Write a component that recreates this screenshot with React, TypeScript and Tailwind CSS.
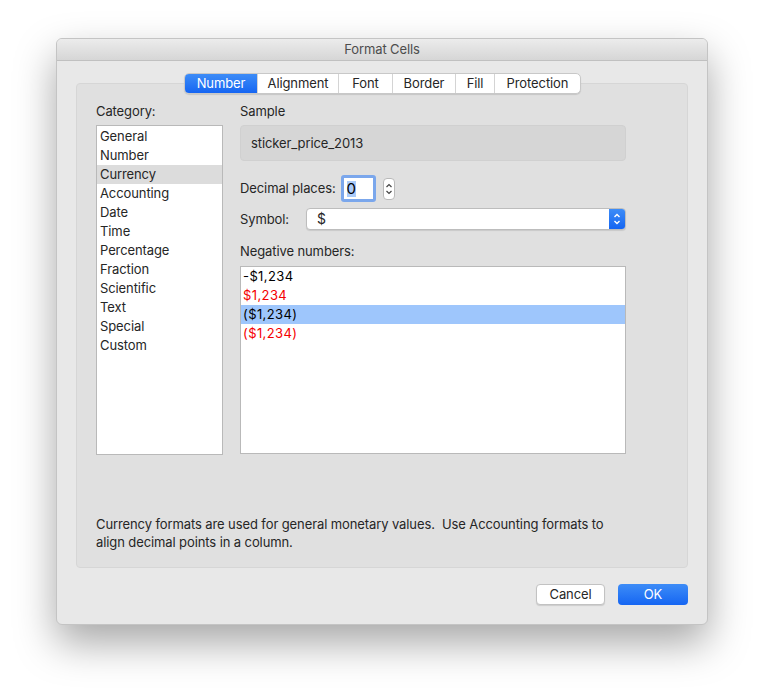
import React, { useState } from 'react';

const tabs = [
  { name: 'Number', w: 'w-[72px]' },
  { name: 'Alignment', w: 'w-[81px]' },
  { name: 'Font', w: 'w-[54px]' },
  { name: 'Border', w: 'w-[63px]' },
  { name: 'Fill', w: 'w-[39px]' },
  { name: 'Protection', w: 'w-[86px]' },
];
const categories = ['General', 'Number', 'Currency', 'Accounting', 'Date', 'Time', 'Percentage', 'Fraction', 'Scientific', 'Text', 'Special', 'Custom'];
const negatives = [
  { label: '-$1,234', red: false },
  { label: '$1,234', red: true },
  { label: '($1,234)', red: false },
  { label: '($1,234)', red: true },
];

const App: React.FC = () => {
  const [tab, setTab] = useState('Number');
  const [category, setCategory] = useState('Currency');
  const [negative, setNegative] = useState(2);

  return (
    <div className="w-[764px] h-[699px] bg-white pt-[38px] pl-[56px] text-[13px] tracking-[-0.1px] text-[#262626]" style={{ fontFamily: 'Inter, "Liberation Sans", sans-serif' }}>
      <div className="w-[652px] h-[587px] rounded-[6px] bg-[#e8e8e8] border border-[#c4c4c4] shadow-[0_18px_40px_rgba(0,0,0,0.35)] flex flex-col overflow-hidden">
        <div className="h-[22px] shrink-0 bg-gradient-to-b from-[#ececec] to-[#d6d6d6] border-b border-[#c0c0c0] flex items-center justify-center text-[13px] text-[#4d4d4d]">
          Format Cells
        </div>

        <div className="relative mx-[19px] mt-[22px] h-[485px] rounded-[4px] bg-[#e0e0e0] border border-[#d6d6d6]">
          <div className="absolute -top-[11px] left-[107px] flex h-[21px] rounded-[5px] bg-white border border-[#c8c8c8] shadow-[0_1px_1px_rgba(0,0,0,0.12)] overflow-hidden">
            {tabs.map((t, i) => (
              <button
                key={t.name}
                onClick={() => setTab(t.name)}
                className={`${t.w} leading-[19px] text-[13px] text-center ${i > 0 ? 'border-l border-[#d4d4d4]' : ''} ${tab === t.name ? 'bg-gradient-to-b from-[#3d8cf7] to-[#1565f2] text-white' : 'text-[#262626]'}`}
              >
                {t.name}
              </button>
            ))}
          </div>

          <div className="flex pt-[18px] pl-[19px]">
            <div className="w-[127px]">
              <div className="leading-[18px]">Category:</div>
              <div className="mt-[5px] h-[330px] bg-white border border-[#b9b9b9] pt-[1px]">
                {categories.map((c) => (
                  <div
                    key={c}
                    onClick={() => setCategory(c)}
                    className={`h-[19px] leading-[19px] pl-[3px] ${category === c ? 'bg-[#dcdcdc]' : ''}`}
                  >
                    {c}
                  </div>
                ))}
              </div>
            </div>

            <div className="ml-[17px] w-[386px]">
              <div className="leading-[18px]">Sample</div>
              <div className="mt-[5px] h-[36px] rounded-[4px] bg-[#d6d6d6] border border-[#d0d0d0] flex items-center pl-[10px] pt-[2px]">
                sticker_price_2013
              </div>

              <div className="mt-[14px] flex items-center h-[27px]">
                <span>Decimal places:</span>
                <div className="ml-[5px] w-[35px] h-[27px] rounded-[3px] bg-[#7ba7ec] p-[3px]">
                  <div className="h-full bg-white flex items-center pl-[3px] text-[15px] text-black">
                    <span className="bg-[#aacbfa] leading-[16px]">0</span>
                  </div>
                </div>
                <div className="ml-[7px] w-[12px] h-[22px] rounded-[4px] bg-white border border-[#b9b9b9] flex flex-col items-center justify-center">
                  <svg width="8" height="16" viewBox="0 0 8 16" fill="none" stroke="#444" strokeWidth="1.2">
                    <path d="M1.5 6 L4 3.5 L6.5 6" />
                    <path d="M1.5 10 L4 12.5 L6.5 10" />
                  </svg>
                </div>
              </div>

              <div className="mt-[6px] flex items-center h-[22px]">
                <span className="w-[66px] pt-[2px]">Symbol:</span>
                <div className="flex-1 h-[22px] flex rounded-[4px] bg-white border border-[#bdbdbd] shadow-[0_1px_1px_rgba(0,0,0,0.1)] overflow-hidden">
                  <div className="flex-1 pl-[10px] leading-[20px] text-[14px]">$</div>
                  <div className="w-[16px] bg-gradient-to-b from-[#3d8cf7] to-[#1565f2] flex items-center justify-center">
                    <svg width="8" height="14" viewBox="0 0 8 14" fill="none" stroke="white" strokeWidth="1.4">
                      <path d="M1.5 5 L4 2.5 L6.5 5" />
                      <path d="M1.5 9 L4 11.5 L6.5 9" />
                    </svg>
                  </div>
                </div>
              </div>

              <div className="mt-[12px] leading-[18px]">Negative numbers:</div>
              <div className="mt-[6px] h-[188px] bg-white border border-[#b9b9b9]">
                {negatives.map((n, i) => (
                  <div
                    key={i}
                    onClick={() => setNegative(i)}
                    className={`h-[19px] leading-[19px] pl-[2px] text-[13px] tracking-[0.4px] ${negative === i ? 'bg-[#9ec6fc]' : ''} ${n.red ? 'text-[#f50000]' : 'text-black'}`}
                  >
                    {n.label}
                  </div>
                ))}
              </div>
            </div>
          </div>

          <div className="mt-[60px] pl-[19px] pr-[60px] leading-[18px]">
            Currency formats are used for general monetary values.&nbsp; Use Accounting formats to align decimal points in a column.
          </div>
        </div>

        <div className="flex justify-end gap-[13px] pr-[19px] mt-[16px]">
          <button className="w-[69px] h-[21px] rounded-[4px] bg-white border border-[#c2c2c2] shadow-[0_1px_1px_rgba(0,0,0,0.12)] text-[13px] leading-[19px]">Cancel</button>
          <button className="w-[70px] h-[21px] rounded-[4px] bg-gradient-to-b from-[#3d8cf7] to-[#1565f2] text-white text-[13px] leading-[21px]">OK</button>
        </div>
      </div>
    </div>
  );
};

export default App;
